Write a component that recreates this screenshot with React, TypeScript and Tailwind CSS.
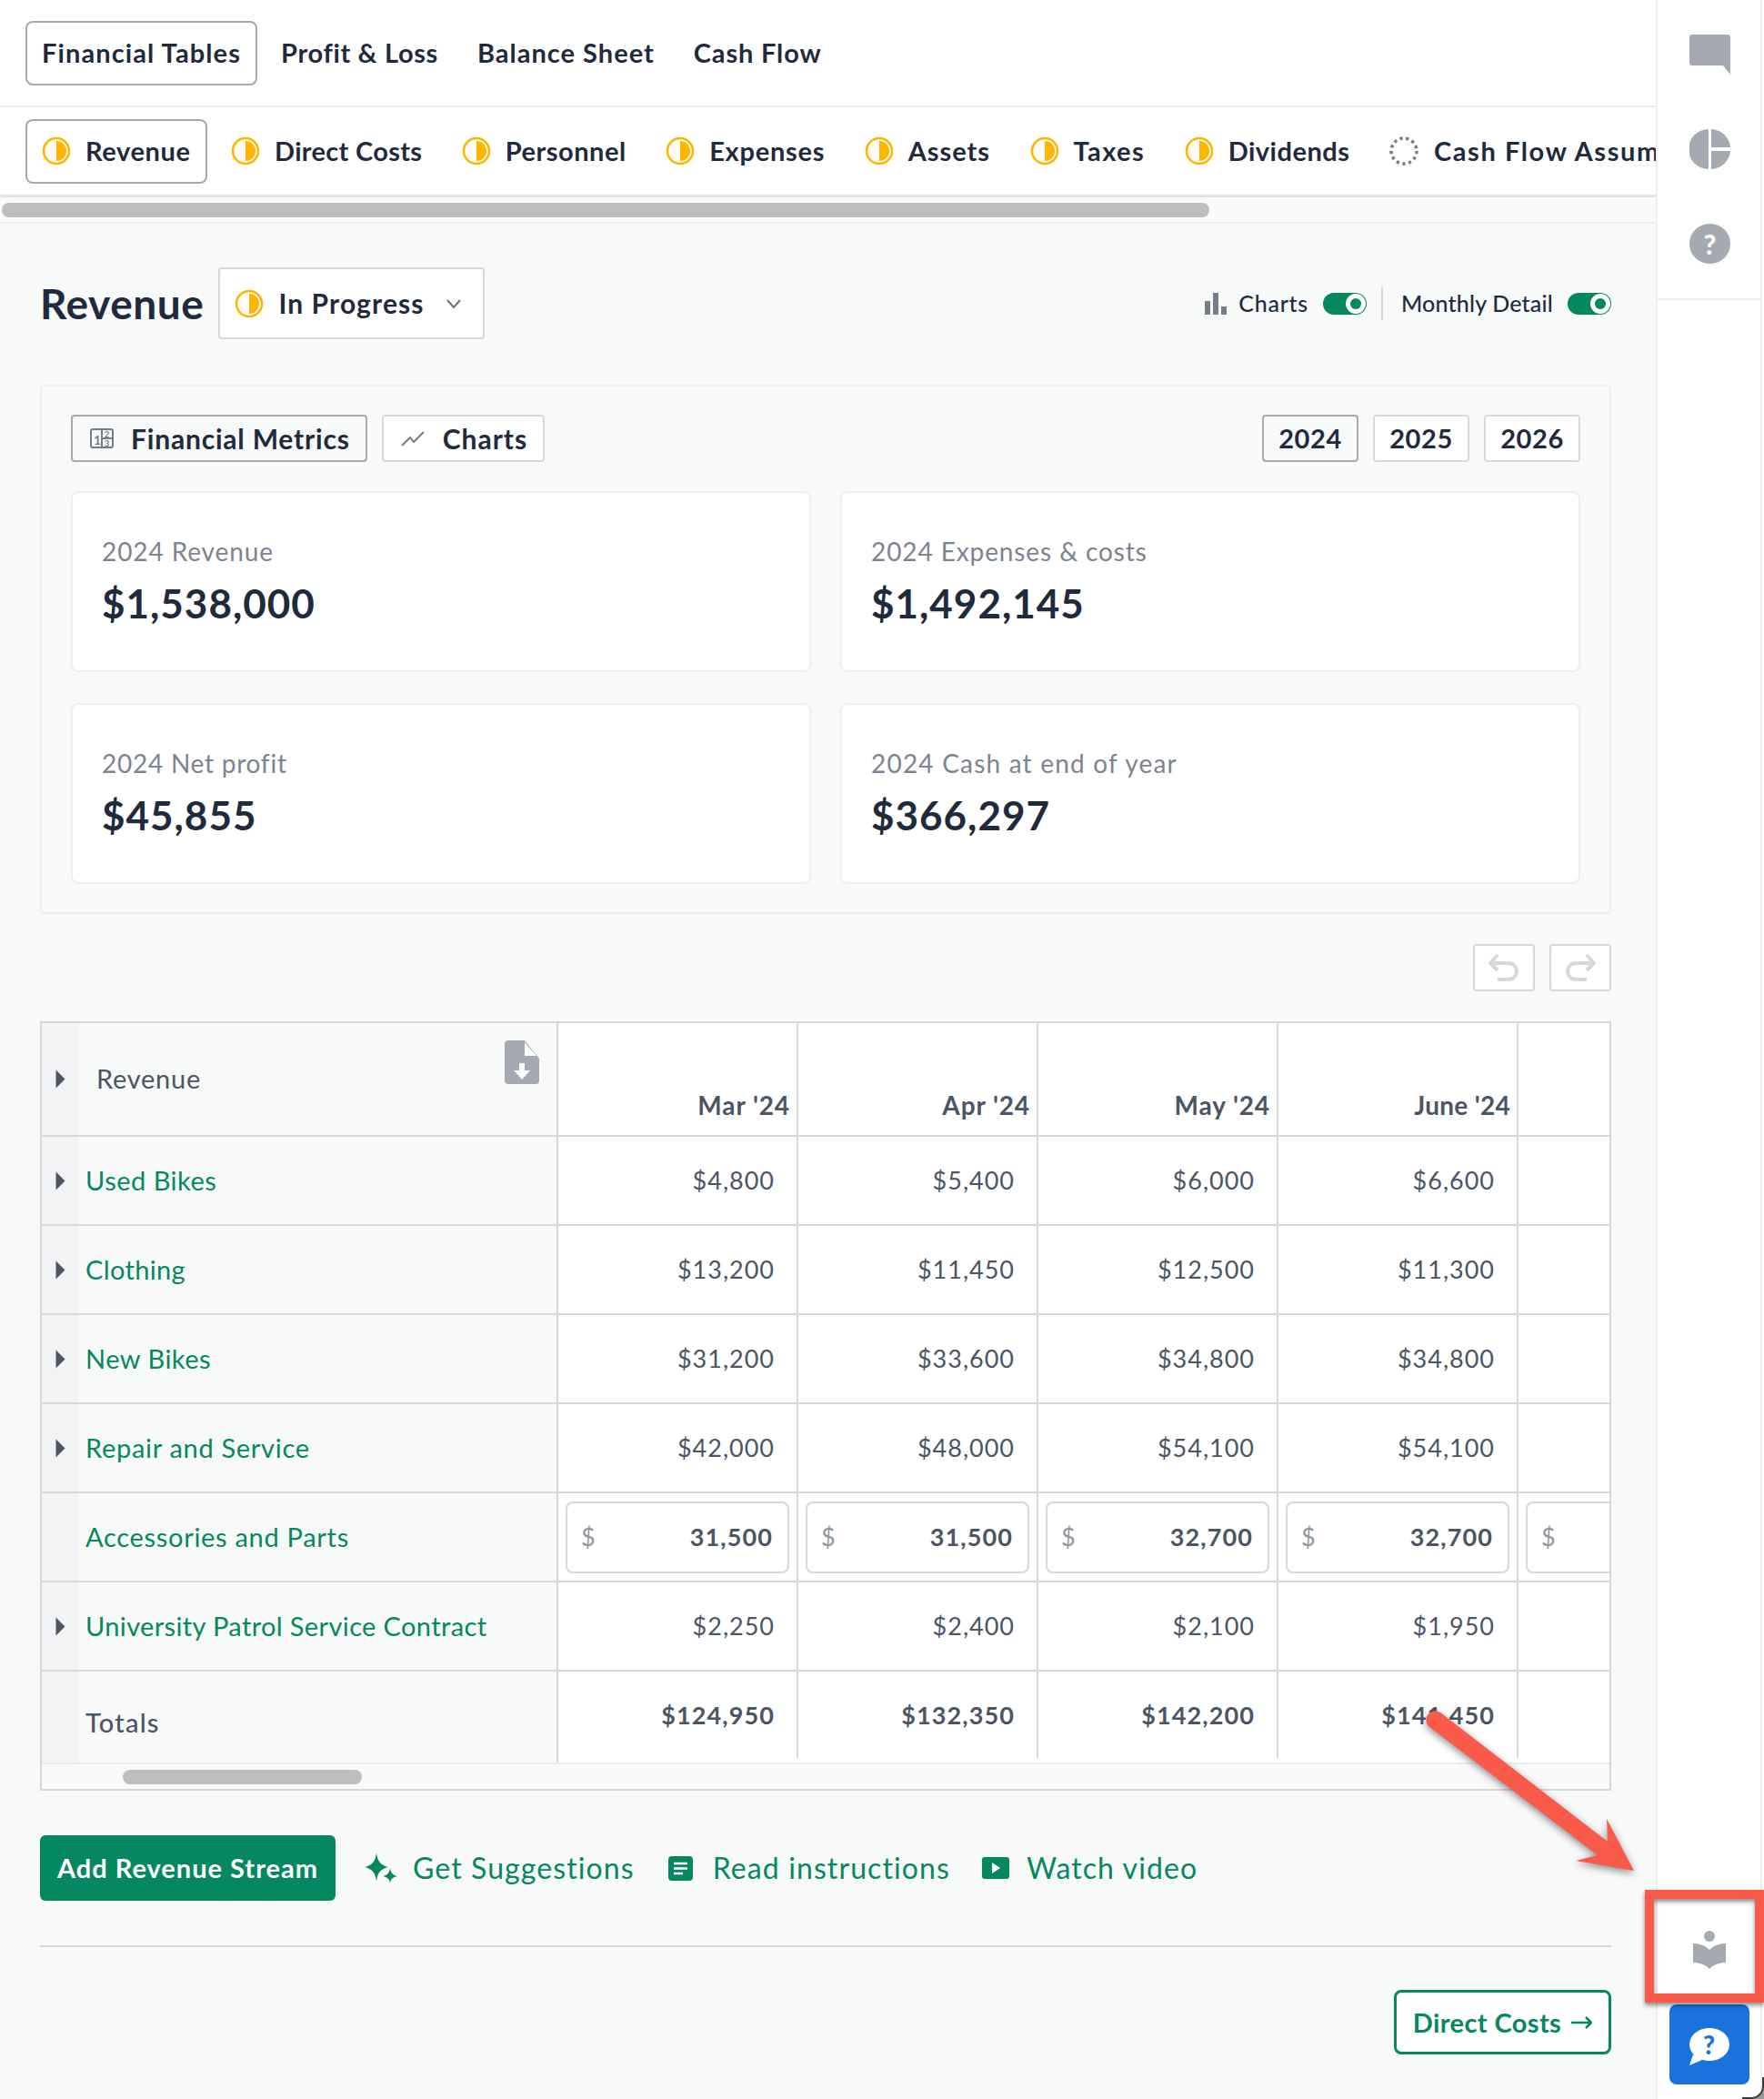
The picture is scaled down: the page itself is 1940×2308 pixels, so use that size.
const halfIcon = (
  <svg width="32" height="32" viewBox="0 0 32 32" className="shrink-0">
    <circle cx="16" cy="16" r="14" fill="#fffdf5" stroke="#ffb400" strokeWidth="2.5" />
    <path d="M16 5 A11 11 0 0 1 16 27 Z" fill="#ffb400" />
  </svg>
)

const dashedIcon = (
  <svg width="32" height="32" viewBox="0 0 32 32" className="shrink-0">
    <circle cx="16" cy="16" r="14" fill="none" stroke="#767c88" strokeWidth="3.5" strokeDasharray="3.2 3.57" />
  </svg>
)

const navLinks = [
  { label: 'Profit & Loss', tracking: 'tracking-[0.65px]' },
  { label: 'Balance Sheet', tracking: 'tracking-[1px]' },
  { label: 'Cash Flow', tracking: 'tracking-[0.85px]' },
]

const sections = [
  { label: 'Direct Costs', tracking: 'tracking-[0.3px]' },
  { label: 'Personnel', tracking: 'tracking-[0.5px]' },
  { label: 'Expenses', tracking: 'tracking-[0.75px]' },
  { label: 'Assets', tracking: 'tracking-[0.95px]' },
  { label: 'Taxes', tracking: 'tracking-[1.4px]' },
  { label: 'Dividends', tracking: 'tracking-[0.5px]' },
]

const metrics = [
  { label: '2024 Revenue', value: '$1,538,000', tracking: 'tracking-[0.9px]' },
  { label: '2024 Expenses & costs', value: '$1,492,145', tracking: 'tracking-[0.9px]' },
  { label: '2024 Net profit', value: '$45,855', tracking: 'tracking-[0.75px]' },
  { label: '2024 Cash at end of year', value: '$366,297', tracking: 'tracking-[1.2px]' },
]

const rows = [
  { name: 'Used Bikes', tracking: 'tracking-[0.5px]', values: ['$4,800', '$5,400', '$6,000', '$6,600'] },
  { name: 'Clothing', tracking: 'tracking-[0.35px]', values: ['$13,200', '$11,450', '$12,500', '$11,300'] },
  { name: 'New Bikes', tracking: 'tracking-[0.5px]', values: ['$31,200', '$33,600', '$34,800', '$34,800'] },
  { name: 'Repair and Service', tracking: 'tracking-[0.7px]', values: ['$42,000', '$48,000', '$54,100', '$54,100'] },
]

function Caret() {
  return (
    <svg width="11" height="21" viewBox="0 0 11 21">
      <path d="M0.5 0.5 L10.5 10.5 L0.5 20.5 Z" fill="#4b5563" />
    </svg>
  )
}

function Gutter({ caret = true }: { caret?: boolean }) {
  return (
    <div className="flex w-[40px] shrink-0 items-center bg-[#f2f3f5] pl-[15px]">{caret && <Caret />}</div>
  )
}

function Toggle() {
  return (
    <div className="flex h-[24px] w-[48px] items-center justify-end rounded-full bg-[#05875f] pr-[1px]">
      <div className="flex h-[22px] w-[22px] items-center justify-center rounded-full bg-white">
        <div className="h-[12px] w-[12px] rounded-full bg-[#05875f]" />
      </div>
    </div>
  )
}

function MoneyInput({ value }: { value: string }) {
  return (
    <div className="flex h-[79px] w-[246px] shrink-0 items-center justify-between rounded-[8px] border-2 border-[#d6d8dd] bg-white pl-[15px] pr-[16px]">
      <span className="text-[27px] text-[#9095a0]">$</span>
      <span className="text-[27px] font-bold tracking-[1.1px] text-[#4b5563]">{value}</span>
    </div>
  )
}

function Row({ name, values, tracking }: { name: string; values: string[]; tracking: string }) {
  return (
    <div className="flex h-[98px] border-b-2 border-[#d6d8dd]">
      <Gutter />
      <div className={`flex w-[528px] shrink-0 items-center border-r-2 border-[#d6d8dd] pl-[8px] text-[29px] text-[#05875f] ${tracking}`}>
        {name}
      </div>
      {values.map((v, i) => (
        <div key={i} className="flex w-[264px] shrink-0 items-center justify-end border-r-2 border-[#d6d8dd] bg-white pr-[24px] text-[27px] tracking-[1px] text-[#4b5563]">
          {v}
        </div>
      ))}
      <div className="flex-1 bg-white" />
    </div>
  )
}

export default function App() {
  return (
    <div className="relative flex h-[2308px] w-[1940px] overflow-hidden bg-white font-['Lato',sans-serif] text-[#1f2a3d]">
      <div className="flex w-[1821px] shrink-0 flex-col">
        <div className="flex h-[118px] items-center gap-[9px] border-b-2 border-[#ececee] pl-[28px] text-[29px] font-bold">
          <div className="flex h-[71px] items-center rounded-[8px] border-2 border-[#a5a9b2] px-[16px] tracking-[1.1px]">
            Financial Tables
          </div>
          {navLinks.map((l) => (
            <div key={l.label} className={`px-[17px] ${l.tracking}`}>
              {l.label}
            </div>
          ))}
        </div>

        <div className="flex h-[99px] items-center gap-[9.5px] overflow-hidden border-b-[3px] border-[#e2e3e6] pl-[28px] text-[29px] font-bold">
          <div className="flex h-[71px] shrink-0 items-center gap-[16px] rounded-[8px] border-2 border-[#a5a9b2] px-[16px] tracking-[0.6px]">
            {halfIcon}
            Revenue
          </div>
          {sections.map((s) => (
            <div key={s.label} className={`flex shrink-0 items-center gap-[16px] px-[17px] ${s.tracking}`}>
              {halfIcon}
              {s.label}
            </div>
          ))}
          <div className="flex shrink-0 items-center gap-[17px] px-[17px] tracking-[1.6px]">
            {dashedIcon}
            Cash Flow Assumptions
          </div>
        </div>

        <div className="flex h-[29px] items-center border-b-2 border-[#eeeeee] bg-[#fafafa] pl-[2px]">
          <div className="h-[16px] w-[1328px] rounded-full bg-[#bebebe]" />
        </div>

        <div className="flex flex-1 flex-col bg-[#f8faf9] pl-[44px] pr-[49px] pt-[48px]">
          <div className="flex h-[79px] items-center">
            <h1 className="text-[46px] font-bold tracking-[0.55px]">Revenue</h1>
            <div className="ml-[16px] flex h-[79px] w-[293px] items-center rounded-[4px] border-2 border-[#d6d8dd] bg-white pl-[16px] text-[30px] font-bold tracking-[1.1px]">
              {halfIcon}
              <span className="ml-[16px]">In Progress</span>
              <svg width="18" height="12" viewBox="0 0 18 12" className="ml-[23px]">
                <path d="M2 2 L9 10 L16 2" fill="none" stroke="#6b7280" strokeWidth="2" />
              </svg>
            </div>
            <div className="ml-auto flex items-center text-[25px] font-medium">
              <svg width="24" height="24" viewBox="0 0 24 24">
                <rect x="0" y="9" width="6" height="15" fill="#767c88" />
                <rect x="9" y="0" width="6" height="24" fill="#767c88" />
                <rect x="18" y="15" width="6" height="9" fill="#767c88" />
              </svg>
              <span className="ml-[13px] mr-[16px] tracking-[0.75px]">Charts</span>
              <Toggle />
              <div className="ml-[16px] mr-[20px] h-[36px] w-[2px] bg-[#d6d8dd]" />
              <span className="mr-[16px] tracking-[0.2px]">Monthly Detail</span>
              <Toggle />
            </div>
          </div>

          <div className="mt-[50px] flex h-[582px] flex-col rounded-[4px] border-2 border-[#eeefef] px-[32px] pt-[31px]">
            <div className="flex h-[52px] items-stretch gap-[16px] text-[30px] font-bold">
              <div className="flex items-center gap-[19px] rounded-[4px] border-2 border-[#a5a9b2] pl-[19px] pr-[17px] tracking-[0.8px]">
                <svg width="26" height="22" viewBox="0 0 26 22">
                  <rect x="1" y="1" width="24" height="20" rx="2" fill="none" stroke="#767c88" strokeWidth="2" />
                  <path d="M13 1 V21 M14 11 H25" stroke="#767c88" strokeWidth="2" />
                  <text x="4" y="18" fontSize="14" fill="#767c88" fontFamily="Lato">1</text>
                  <text x="16" y="10" fontSize="9" fill="#767c88" fontFamily="Lato">2</text>
                  <text x="16" y="20" fontSize="9" fill="#767c88" fontFamily="Lato">3</text>
                </svg>
                Financial Metrics
              </div>
              <div className="flex items-center gap-[20px] rounded-[4px] border-2 border-[#d6d8dd] bg-white pl-[19px] pr-[17px] tracking-[1px]">
                <svg width="26" height="18" viewBox="0 0 26 18">
                  <path d="M1 17 L10 8 L14 13 L25 2" fill="none" stroke="#767c88" strokeWidth="2" />
                </svg>
                Charts
              </div>
              <div className="ml-auto flex gap-[16px] text-[29px] tracking-[0.6px]">
                <div className="flex w-[106px] items-center justify-center rounded-[4px] border-2 border-[#a5a9b2]">2024</div>
                <div className="flex w-[106px] items-center justify-center rounded-[4px] border-2 border-[#d6d8dd] bg-white">2025</div>
                <div className="flex w-[106px] items-center justify-center rounded-[4px] border-2 border-[#d6d8dd] bg-white">2026</div>
              </div>
            </div>
            <div className="mt-[32px] grid grid-cols-2 gap-x-[32px] gap-y-[34px]">
              {metrics.map((m) => (
                <div key={m.label} className="flex h-[199px] flex-col rounded-[8px] border-2 border-[#eeefef] bg-white pl-[32px] pt-[46px]">
                  <div className={`text-[28px] leading-[36px] text-[#7d8390] ${m.tracking}`}>{m.label}</div>
                  <div className="mt-[9px] text-[44px] font-bold leading-[60px] tracking-[1px]">{m.value}</div>
                </div>
              ))}
            </div>
          </div>

          <div className="mt-[33px] flex h-[52px] justify-end gap-[16px]">
            <div className="flex w-[68px] items-center justify-center rounded-[4px] border-2 border-[#d6d8dd] bg-white">
              <svg width="34" height="32" viewBox="0 0 34 32">
                <path d="M10 2 L2 11 L10 19 M2 11 H22 A8.5 8.5 0 0 1 22 29 H10" fill="none" stroke="#d6d8dd" strokeWidth="4" />
              </svg>
            </div>
            <div className="flex w-[68px] items-center justify-center rounded-[4px] border-2 border-[#d6d8dd] bg-white">
              <svg width="34" height="32" viewBox="0 0 34 32">
                <path d="M24 2 L32 11 L24 19 M32 11 H12 A8.5 8.5 0 0 0 12 29 H24" fill="none" stroke="#d6d8dd" strokeWidth="4" />
              </svg>
            </div>
          </div>

          <div className="mt-[33px] flex h-[846px] flex-col border-2 border-[#d6d8dd]">
            <div className="flex h-[125px] border-b-2 border-[#d6d8dd]">
              <Gutter />
              <div className="flex w-[528px] shrink-0 items-start justify-between border-r-2 border-[#d6d8dd] pl-[20px] pr-[19px] pt-[19px]">
                <span className="mt-[20px] text-[29px] tracking-[0.75px] text-[#4b5563]">Revenue</span>
                <svg width="38" height="48" viewBox="0 0 38 48">
                  <path d="M4 0 H22 L38 20 V44 A4 4 0 0 1 34 48 H4 A4 4 0 0 1 0 44 V4 A4 4 0 0 1 4 0 Z" fill="#a5a9b2" />
                  <path d="M22 2 V17 H35 Z" fill="#ffffff" />
                  <path d="M16 25 H22 V33 H28 L19 43 L10 33 H16 Z" fill="#ffffff" />
                </svg>
              </div>
              {[
                { m: "Mar '24", t: 'tracking-[0.9px]' },
                { m: "Apr '24", t: 'tracking-[0.9px]' },
                { m: "May '24", t: 'tracking-[0.9px]' },
                { m: "June '24", t: 'tracking-[0.3px]' },
              ].map(({ m, t }) => (
                <div key={m} className={`flex w-[264px] shrink-0 items-end justify-end border-r-2 border-[#d6d8dd] bg-white pb-[12px] pr-[7px] text-[28px] font-bold text-[#4b5563] ${t}`}>
                  {m}
                </div>
              ))}
              <div className="flex-1 bg-white" />
            </div>
            {rows.map((r) => (
              <Row key={r.name} name={r.name} values={r.values} tracking={r.tracking} />
            ))}
            <div className="flex h-[98px] border-b-2 border-[#d6d8dd]">
              <Gutter caret={false} />
              <div className="flex w-[528px] shrink-0 items-center border-r-2 border-[#d6d8dd] pl-[8px] text-[29px] tracking-[0.7px] text-[#05875f]">
                Accessories and Parts
              </div>
              {['31,500', '31,500', '32,700', '32,700'].map((v, i) => (
                <div key={i} className="flex w-[264px] shrink-0 items-center border-r-2 border-[#d6d8dd] bg-white pl-[8px]">
                  <MoneyInput value={v} />
                </div>
              ))}
              <div className="flex flex-1 items-center overflow-hidden bg-white pl-[8px]">
                <MoneyInput value="" />
              </div>
            </div>
            <Row
              name="University Patrol Service Contract"
              tracking="tracking-[0.37px]"
              values={['$2,250', '$2,400', '$2,100', '$1,950']}
            />
            <div className="flex h-[100px]">
              <Gutter caret={false} />
              <div className="flex w-[528px] shrink-0 items-center border-r-2 border-[#d6d8dd] pl-[8px] pt-[12px] text-[29px] font-medium tracking-[1.2px] text-[#4b5563]">
                Totals
              </div>
              {['$124,950', '$132,350', '$142,200', '$141,450'].map((v) => (
                <div key={v} className="flex w-[264px] shrink-0 items-start border-b-[5px] border-b-white bg-white">
                  <div className="flex h-full w-full items-start justify-end border-r-2 border-[#d6d8dd] pr-[24px] pt-[28px] text-[27px] font-bold tracking-[1.1px] text-[#4b5563]">
                    {v}
                  </div>
                </div>
              ))}
              <div className="flex-1 bg-white" />
            </div>
            <div className="flex flex-1 items-center border-t-2 border-[#ececee] bg-[#fafafa] pl-[89px]">
              <div className="h-[16px] w-[263px] rounded-full bg-[#bebebe]" />
            </div>
          </div>

          <div className="mt-[49px] flex h-[72px] items-center text-[32px] tracking-[1.1px] text-[#05875f]">
            <div className="flex h-full w-[325px] items-center justify-center rounded-[6px] bg-[#05875f] text-[29px] font-bold tracking-[1px] text-white">
              Add Revenue Stream
            </div>
            <svg width="36" height="34" viewBox="0 0 36 34" className="ml-[32px]">
              <path d="M13 0 C14 10 18 14 26 16 C18 18 14 22 13 32 C12 22 8 18 0 16 C8 14 12 10 13 0 Z" fill="#05875f" />
              <path d="M28 17 C28.6 22 31 25 36 26 C31 27 28.6 29 28 34 C27.4 29 25 27 20 26 C25 25 27.4 22 28 17 Z" fill="#05875f" />
            </svg>
            <span className="ml-[17px]">Get Suggestions</span>
            <svg width="27" height="27" viewBox="0 0 27 27" className="ml-[37px]">
              <rect width="27" height="27" rx="4" fill="#05875f" />
              <path d="M6 8 H21 M6 13.5 H21 M6 19 H16" stroke="#ffffff" strokeWidth="2.5" />
            </svg>
            <span className="ml-[22px]">Read instructions</span>
            <svg width="30" height="24" viewBox="0 0 30 24" className="ml-[35px]">
              <rect width="30" height="24" rx="3" fill="#05875f" />
              <path d="M11 6 L20 12 L11 18 Z" fill="#ffffff" />
            </svg>
            <span className="ml-[19px]">Watch video</span>
          </div>

          <div className="mt-[49px] h-[2px] bg-[#d6d8dd]" />

          <div className="mt-[47px] flex h-[71px] w-[239px] items-center justify-center gap-[11px] self-end rounded-[8px] border-[3px] border-[#05875f] bg-white text-[29px] font-bold tracking-[0.4px] text-[#05875f]">
            Direct Costs
            <svg width="23" height="14" viewBox="0 0 23 14">
              <path d="M0 7 H21 M16 1 L22 7 L16 13" fill="none" stroke="#05875f" strokeWidth="2.5" />
            </svg>
          </div>
        </div>
      </div>

      <div className="flex w-[117px] shrink-0 flex-col items-center border-l-2 border-r-2 border-[#eeeeee]">
        <div className="flex h-[330px] w-full flex-col items-center gap-[60px] border-b-2 border-[#eeeeee] pl-[2px] pt-[38px]">
          <svg width="45" height="44" viewBox="0 0 45 44">
            <path d="M3 0 H42 A3 3 0 0 1 45 3 V44 L37 34 H3 A3 3 0 0 1 0 31 V3 A3 3 0 0 1 3 0 Z" fill="#a5a9b2" />
          </svg>
          <svg width="45" height="44" viewBox="0 0 45 44">
            <path d="M21 0 V44 A22 22 0 0 1 21 0 Z" fill="#a5a9b2" />
            <path d="M24 0 A22 22 0 0 1 45 20 H24 Z" fill="#a5a9b2" />
            <path d="M24 24 H45 A22 22 0 0 1 24 44 Z" fill="#a5a9b2" />
          </svg>
          <div className="flex h-[44px] w-[45px] items-center justify-center rounded-full bg-[#a5a9b2] text-[30px] font-black leading-none text-white">
            ?
          </div>
        </div>
        <svg width="36" height="42" viewBox="0 0 36 42" className="mt-auto">
          <circle cx="18" cy="6" r="6" fill="#a5a9b2" />
          <path d="M0 14 C7 14 13 16 18 21 C23 16 29 14 36 14 V35 C29 35 23 37 18 42 C13 37 7 35 0 35 Z" fill="#a5a9b2" />
        </svg>
        <div className="mb-[16px] mt-[39px] flex h-[88px] w-[88px] items-center justify-center rounded-[8px] bg-[#1a73dc]">
          <div className="relative flex h-[36px] w-[44px] items-center justify-center rounded-[50%] bg-white text-[28px] font-black leading-none text-[#1a73dc]">
            ?
            <svg width="14" height="12" viewBox="0 0 14 12" className="absolute bottom-[-5px] left-[0px]">
              <path d="M4 0 L14 6 L0 12 Z" fill="#ffffff" />
            </svg>
          </div>
        </div>
      </div>

      <div className="absolute left-[1809px] top-[2078px] h-[124px] w-[131px] border-[10px] border-[#fa5a4a] shadow-[0_3px_5px_rgba(0,0,0,0.45),inset_0_3px_5px_rgba(0,0,0,0.45)]" />
      <svg width="1940" height="2308" viewBox="0 0 1940 2308" className="pointer-events-none absolute left-0 top-0 drop-shadow-[0_3px_4px_rgba(0,0,0,0.45)]">
        <path
          d="M1584 1883 L1768 2025 L1767 2000 L1797 2057 L1733 2046 L1757 2040 L1571 1898 A10 10 0 0 1 1584 1883 Z"
          fill="#fa5a4a"
        />
      </svg>
      <div className="absolute bottom-0 right-0 h-[24px] w-[24px] overflow-hidden">
        <div className="h-full w-full rounded-br-[14px] border-b-2 border-r-2 border-[#3a3a3a] shadow-[0_0_0_14px_#9a9a9a]" />
      </div>
    </div>
  )
}
